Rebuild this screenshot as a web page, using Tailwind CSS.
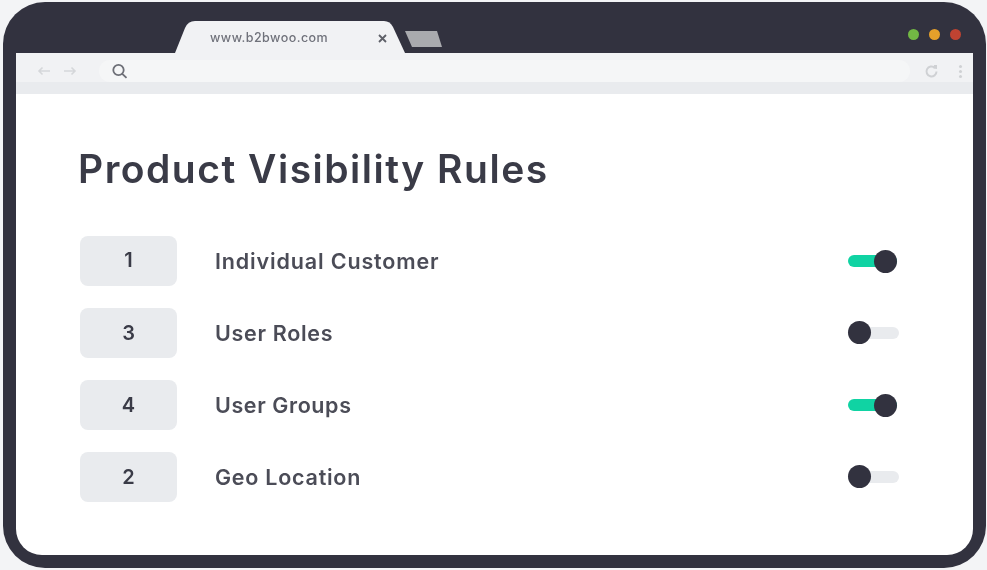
<!DOCTYPE html>
<html lang="en">
<head>
<meta charset="UTF-8">
<title>Product Visibility Rules</title>
<script src="https://cdn.jsdelivr.net/npm/@tailwindcss/browser@4"></script>
</head>
<body class="m-0 h-[570px] w-[987px] overflow-hidden bg-[#f3f4f6] font-['Inter',sans-serif]">
  <div class="ml-[3px] mt-[2px] flex h-[566px] w-[983px] flex-col rounded-[42px] bg-[#32323f] px-[13px] pb-[13px] blur-[0.5px]">
    <!-- tab strip -->
    <div class="flex h-[51px] shrink-0 items-end">
      <div class="relative ml-[159px] h-[32px] w-[231px]">
        <svg class="absolute inset-0" width="231" height="32" viewBox="0 0 231 32"><path d="M0 32 L10 7 Q13 0 20 0 L209 0 Q215 0 218 6 L230 32 Z" fill="#f1f2f4"/></svg>
        <span class="absolute left-[35px] top-[10px] text-[12.5px] font-medium leading-[14px] tracking-[0.45px] text-[#6f717a]">www.b2bwoo.com</span>
        <svg class="absolute left-[203px] top-[13px]" width="9" height="9" viewBox="0 0 9 9"><path d="M1 1 L8 8 M8 1 L1 8" stroke="#5e6068" stroke-width="1.8"/></svg>
      </div>
      <svg class="mb-[5px] ml-[-1px]" width="38" height="17" viewBox="0 0 38 17"><path d="M0 0 L32 0 L37 16 L7 16 Z" fill="#a9aaae"/></svg>
      <div class="mb-[13px] ml-auto flex gap-[10px] pr-[12px]">
        <span class="h-[11px] w-[11px] rounded-full bg-[#72b844]"></span>
        <span class="h-[11px] w-[11px] rounded-full bg-[#e5a02a]"></span>
        <span class="h-[11px] w-[11px] rounded-full bg-[#bf4332]"></span>
      </div>
    </div>
    <!-- page -->
    <div class="flex flex-1 flex-col overflow-hidden rounded-b-[26px] bg-white">
      <div class="flex h-[41px] shrink-0 flex-col bg-[#e9ebee]">
        <div class="flex h-[29px] items-center bg-[#f1f2f4] pt-[7px]">
          <svg class="ml-[21px]" width="14" height="10" viewBox="0 0 14 10" fill="none" stroke="#d5d7da" stroke-width="1.6"><path d="M13 5 H2 M5.5 1.5 L2 5 L5.5 8.5"/></svg>
          <svg class="ml-[12px]" width="14" height="10" viewBox="0 0 14 10" fill="none" stroke="#d5d7da" stroke-width="1.6"><path d="M1 5 H12 M8.5 1.5 L12 5 L8.5 8.5"/></svg>
          <div class="ml-[22px] flex h-[22px] w-[811px] items-center rounded-full bg-[#f5f6f7] pl-[12px]">
            <svg width="17" height="16" viewBox="0 0 17 16" fill="none" stroke="#6d6f77" stroke-width="1.8"><circle cx="7.5" cy="7" r="5.2"/><path d="M11.3 10.8 L15.5 14.8"/></svg>
          </div>
          <svg class="ml-[14px]" width="15" height="15" viewBox="0 0 15 15" fill="none" stroke="#cfd1d4" stroke-width="2"><path d="M12.5 7.5 A5 5 0 1 1 10.8 3.7"/><path d="M10 1 L13 1 L13 5 L9.5 4.5 Z" fill="#cfd1d4" stroke="none"/></svg>
          <div class="ml-[20px] flex flex-col gap-[2px]">
            <span class="h-[3px] w-[3px] rounded-full bg-[#cfd1d4]"></span>
            <span class="h-[3px] w-[3px] rounded-full bg-[#cfd1d4]"></span>
            <span class="h-[3px] w-[3px] rounded-full bg-[#cfd1d4]"></span>
          </div>
        </div>
      </div>
      <div class="flex-1 pl-[62px] pr-[74px] pt-[51px]">
        <h1 class="text-[39px] font-semibold leading-[48px] tracking-[1.5px] text-[#3a3b47]">Product Visibility Rules</h1>
        <div class="mt-[43px] flex flex-col gap-[22px]">
          <div class="flex h-[50px] items-center">
            <div class="ml-[2px] flex h-[50px] w-[97px] items-center justify-center rounded-[8px] bg-[#e9ebee] pb-[2px] text-[20px] font-semibold text-[#3a3b47]">1</div>
            <span class="ml-[38px] text-[21.5px] font-semibold tracking-[0.85px] text-[#4b4c57]">Individual Customer</span>
            <div class="relative ml-auto mr-[2px] h-[12px] w-[49px] rounded-full bg-[#10d3a3]"><span class="absolute right-0 top-[-5.5px] h-[23px] w-[23px] rounded-full bg-[#32323f]"></span></div>
          </div>
          <div class="flex h-[50px] items-center">
            <div class="ml-[2px] flex h-[50px] w-[97px] items-center justify-center rounded-[8px] bg-[#e9ebee] text-[20px] font-semibold text-[#3a3b47]">3</div>
            <span class="ml-[38px] text-[21.5px] font-semibold tracking-[0.7px] text-[#4b4c57]">User Roles</span>
            <div class="relative ml-auto h-[12px] w-[51px] rounded-full bg-[#e9ebee]"><span class="absolute left-0 top-[-6px] h-[23px] w-[23px] rounded-full bg-[#32323f]"></span></div>
          </div>
          <div class="flex h-[50px] items-center">
            <div class="ml-[2px] flex h-[50px] w-[97px] items-center justify-center rounded-[8px] bg-[#e9ebee] text-[20px] font-semibold text-[#3a3b47]">4</div>
            <span class="ml-[38px] text-[21.5px] font-semibold tracking-[0.6px] text-[#4b4c57]">User Groups</span>
            <div class="relative ml-auto mr-[2px] h-[12px] w-[49px] rounded-full bg-[#10d3a3]"><span class="absolute right-0 top-[-5.5px] h-[23px] w-[23px] rounded-full bg-[#32323f]"></span></div>
          </div>
          <div class="flex h-[50px] items-center">
            <div class="ml-[2px] flex h-[50px] w-[97px] items-center justify-center rounded-[8px] bg-[#e9ebee] text-[20px] font-semibold text-[#3a3b47]">2</div>
            <span class="ml-[38px] text-[21.5px] font-semibold tracking-[0.75px] text-[#4b4c57]">Geo Location</span>
            <div class="relative ml-auto h-[12px] w-[51px] rounded-full bg-[#e9ebee]"><span class="absolute left-0 top-[-6px] h-[23px] w-[23px] rounded-full bg-[#32323f]"></span></div>
          </div>
        </div>
      </div>
    </div>
  </div>
</body>
</html>
